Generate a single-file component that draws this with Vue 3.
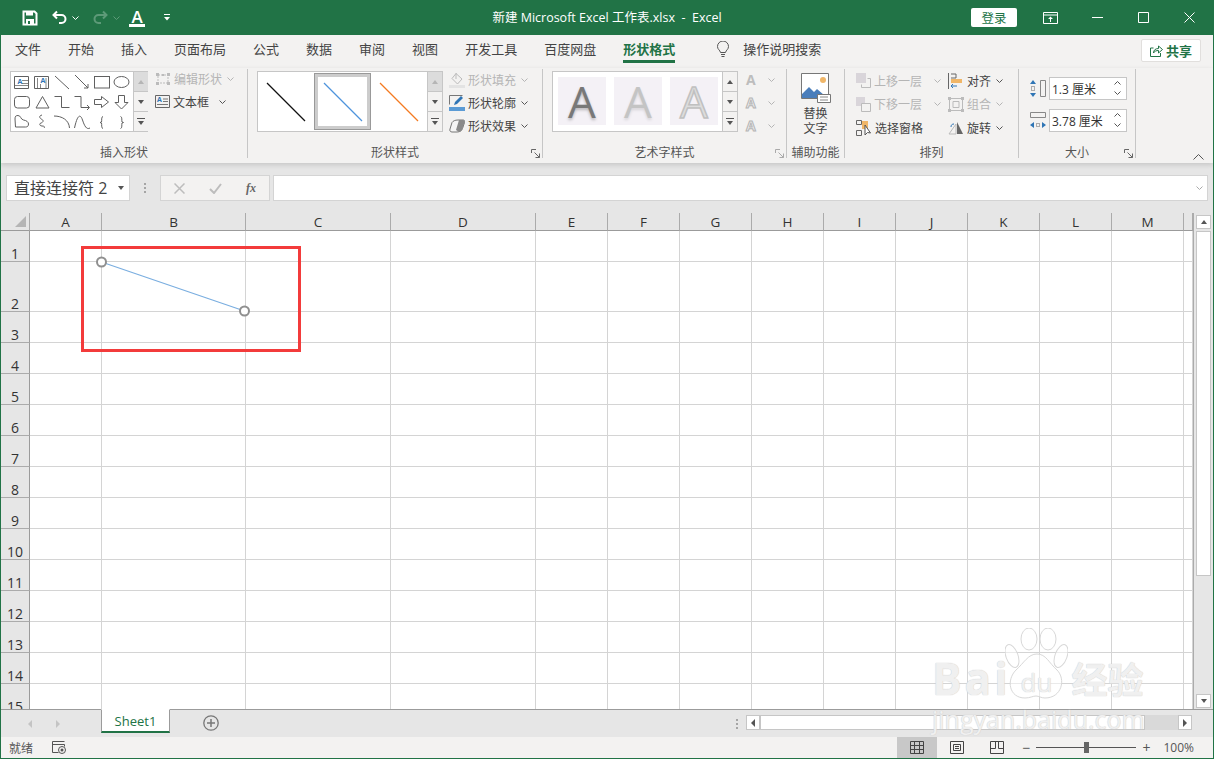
<script setup>
const tabs = ["文件", "开始", "插入", "页面布局", "公式", "数据", "审阅", "视图", "开发工具", "百度网盘"];
const columns = ["A", "B", "C", "D", "E", "F", "G", "H", "I", "J", "K", "L", "M", ""];
const rowHeights = [31, 50, 31, 31, 31, 31, 31, 31, 31, 31, 31, 31, 31, 31, 31];
const rows = rowHeights.map((h, i) => ({ id: i + 1, h }));
const sheetRows = "18px " + rowHeights.map((h) => h + "px").join(" ");
</script>

<template>
  <div class="app">
    <header class="titlebar">
      <div class="qat">
        <svg class="q-save" width="16" height="16" viewBox="0 0 16 16"><path d="M1.500 1.500h11l2 2v11h-13z" fill="none" stroke="#fff" stroke-width="2" /><path d="M4 1.500h7v4H4zM4 9h8v6H4z" fill="#fff" /><path d="M6 11h2v3H6z" fill="#217346" /></svg>
        <svg class="q-undo" width="15" height="15" viewBox="0 0 15 15"><path d="M5 1.500 1.500 5 5 8.500M2 5h7.500a3.700 3.700 0 0 1 0 8H7" fill="none" stroke="#fff" stroke-width="2" /></svg>
        <svg class="chev-w" width="7" height="4" viewBox="0 0 7 4"><path d="M.5.500l3 3 3-3" fill="none" stroke="#fff" /></svg>
        <svg class="q-redo" width="15" height="15" viewBox="0 0 15 15"><path d="M10 1.500 13.500 5 10 8.500M13 5H5.500a3.700 3.700 0 0 0 0 8H8" fill="none" stroke="#5d9a78" stroke-width="2" /></svg>
        <svg class="chev-w" width="7" height="4" viewBox="0 0 7 4"><path d="M.5.500l3 3 3-3" fill="none" stroke="#5d9a78" /></svg>
        <div class="q-font">A</div>
        <svg class="q-more" width="6" height="7" viewBox="0 0 6 7"><path d="M0 .5h6" stroke="#fff" /><path d="M0 3h6L3 6.500z" fill="#fff" /></svg>
      </div>
      <div class="doc-title">新建 Microsoft Excel 工作表.xlsx&nbsp; -&nbsp; Excel</div>
      <div class="win-controls">
        <button class="login">登录</button>
        <svg class="w-display" width="15" height="12" viewBox="0 0 15 12"><path d="M.5.500h14v11H.5zM.5 3h14" fill="none" stroke="#fff" /><path d="M7.500 4.500 5 7h5zM7 7h1v3H7z" fill="#fff" /></svg>
        <svg class="w-min" width="11" height="11" viewBox="0 0 11 11"><path d="M0 5.500h11" stroke="#fff" /></svg>
        <svg class="w-max" width="11" height="11" viewBox="0 0 11 11"><path d="M.5.500h10v10H.5z" fill="none" stroke="#fff" /></svg>
        <svg class="w-close" width="11" height="11" viewBox="0 0 11 11"><path d="M.5.500l10 10M10.500.500l-10 10" stroke="#fff" /></svg>
      </div>
    </header>

    <nav class="tabs">
      <span v-for="t in tabs" :key="t">{{ t }}</span>
      <span class="tab-active">形状格式</span>
      <svg class="bulb" width="12" height="17" viewBox="0 0 12 17"><path d="M3.500 11.500C3 9 .5 8.500.5 5.500a5.500 5.500 0 0 1 11 0c0 3-2.500 3.500-3 6zM4 13.500h4M4.500 15.500h3" fill="none" stroke="#555" /></svg>
      <span class="tell-me">操作说明搜索</span>
      <button class="share">
        <svg width="13" height="12" viewBox="0 0 13 12"><path d="M3.500 3H.5v8.500h10V8" fill="none" stroke="#217346" /><path d="M3.500 8c0-3 2-4.500 5-4.500V1l4 3.500-4 3.500V5.500c-2 0-4 .5-5 2.500z" fill="none" stroke="#217346" /></svg>
        共享
      </button>
    </nav>

    <section class="ribbon">
      <div class="group g-shapes">
        <div class="group-body">
          <div class="gallery shapes-gallery">
            <svg class="shapes" width="123" height="60" viewBox="10 71 123 60" fill="none" stroke="#606060">
              <path d="M14.500 76.500h14v12h-14zM34.500 76.500h14v12h-14z" />
              <path d="M22 80.500h6M22 83.500h6M15 85.500h13M37.500 78v10M40.500 84v4M46 78v10" stroke="#888" />
              <path d="M55 76l14 13M75 75l13 13M88 84v4h-4" />
              <rect x="94.500" y="76.500" width="15" height="11.500" />
              <ellipse cx="121.500" cy="82" rx="7.500" ry="5.500" />
              <rect x="14.500" y="96.500" width="15" height="11.500" rx="3" />
              <path d="M42.500 96.500 36 108h13zM54.500 96.500h7v11h8M74.500 96.500h6.500v11h8M87 105l2.500 2.500L87 110M94.500 99.500h7v-3l7 5.500-7 5.500v-3h-7zM118.500 95.500h6v7h3.500l-6.500 6.500-6.500-6.500h3.500z" />
              <path d="M15 119c0-3 1-3.500 3-3.500 3 0 2.500 4 5.500 4.500 3 .500 5 2 5 4 0 2-1 3-3 3H15.500zM42 115c-4 1-2 3.500 0 4.500s1 3-1 3.500-1.500 3 1 3 3 1 2 2" />
              <path d="M54 116c8 0 15 4 15.500 12M74.500 128c3-14 6-14 8-8s4 10 7.500 8" />
              <path d="M103 116.500c-2 0-1 4.500-1.500 5.500l-1.500.500 1.500.500c.500 1 -.500 5.500 1.500 5.500M120.500 116.500c2 0 1 4.500 1.500 5.500l1.500.500-1.500.500c-.500 1 .500 5.500-1.500 5.500" />
              <text x="17.500" y="83.500" class="svg-a">A</text>
              <text x="40.500" y="83" class="svg-a">A</text>
            </svg>
            <div class="scroller">
              <span class="sc-up disabled"><i class="tri up"></i></span>
              <span class="sc-down"><i class="tri"></i></span>
              <span class="sc-more"><i class="tri bar"></i></span>
            </div>
          </div>
          <div class="tool-col col-shapes">
            <div class="tool disabled">
              <svg width="16" height="14" viewBox="0 0 16 14"><path d="M3 3h10v8H3z" fill="none" stroke="#bbb" stroke-dasharray="2 1" /><path d="M1 1h3v3H1zM12 1h3v3h-3zM1 10h3v3H1zM12 10h3v3h-3zM7 2h2v2H7z" fill="#bbb" /></svg>
              编辑形状
              <svg class="chev" viewBox="0 0 7 4"><path d="M.5.500l3 3 3-3" /></svg>
            </div>
            <div class="tool">
              <svg width="15" height="13" viewBox="0 0 15 13"><path d="M.5.500h14v12H.5z" fill="none" stroke="#666" /><path d="M8 4h5M8 6.500h5M2 9.500h11" stroke="#777" /><text x="2" y="7" class="svg-a">A</text></svg>
              文本框
              <svg class="chev chev-far" viewBox="0 0 7 4"><path d="M.5.500l3 3 3-3" /></svg>
            </div>
          </div>
        </div>
        <div class="group-label">插入形状</div>
      </div>

      <div class="group g-style">
        <div class="group-body">
          <div class="gallery style-gallery">
            <div class="line-tile"><svg width="40" height="40" viewBox="0 0 40 40"><path d="M1 1l38 38" fill="none" stroke="#111" stroke-width="1.300" /></svg></div>
            <div class="line-tile selected"><svg width="40" height="40" viewBox="0 0 40 40"><path d="M1 1l38 38" fill="none" stroke="#4f94dc" stroke-width="1.300" /></svg></div>
            <div class="line-tile"><svg width="40" height="40" viewBox="0 0 40 40"><path d="M1 1l38 38" fill="none" stroke="#f47a20" stroke-width="1.300" /></svg></div>
            <div class="scroller">
              <span class="sc-up disabled"><i class="tri up"></i></span>
              <span class="sc-down"><i class="tri"></i></span>
              <span class="sc-more"><i class="tri bar"></i></span>
            </div>
          </div>
          <div class="tool-col col-style">
            <div class="tool disabled">
              <svg width="16" height="16" viewBox="0 0 16 16"><path d="M7 1.500l6 5.500-4.500 5L3 6.500z" fill="#f3f2f1" stroke="#bbb" /><path d="M7 1v6" stroke="#bbb" /><path d="M0 13h16v3H0z" fill="#e3e3e3" /></svg>
              形状填充
              <svg class="chev" viewBox="0 0 7 4"><path d="M.5.500l3 3 3-3" /></svg>
            </div>
            <div class="tool">
              <svg width="16" height="16" viewBox="0 0 16 16"><path d="M.5.500h13M.5.500v9" fill="none" stroke="#777" /><path d="M5 10l1-3 6-6 2 2-6 6z" fill="#2f75b5" /><path d="M0 12h16v4H0z" fill="#5b9bd5" /></svg>
              形状轮廓
              <svg class="chev" viewBox="0 0 7 4"><path d="M.5.500l3 3 3-3" /></svg>
            </div>
            <div class="tool">
              <svg width="16" height="14" viewBox="0 0 16 14"><path d="M3 3.500C4 2 6 1 9 1h5c1.500 0 2 1 1.500 2.500l-2 6C13 11.500 11 13 8 13H3C1 13 .5 11.500 1 10z" fill="#f5f5f5" stroke="#777" /><path d="M10 1h4c1.500 0 2 1 1.500 2.500l-2 6C13 11.500 12 12.500 10 13l-3-2z" fill="#8a8a8a" /></svg>
              形状效果
              <svg class="chev" viewBox="0 0 7 4"><path d="M.5.500l3 3 3-3" /></svg>
            </div>
          </div>
        </div>
        <div class="group-label">形状样式</div>
        <svg class="launcher" width="9" height="9" viewBox="0 0 9 9"><path d="M.5 4V.5H5M8.500 8.500l-5-5M8.500 4.500v4h-4" fill="none" stroke="#666" /></svg>
      </div>

      <div class="group g-art">
        <div class="group-body">
          <div class="gallery art-gallery">
            <div class="art-tiles">
              <span class="art a1">A</span>
              <span class="art a2">A</span>
              <span class="art a3">A</span>
            </div>
            <div class="scroller">
              <span class="sc-up"><i class="tri up"></i></span>
              <span class="sc-down"><i class="tri"></i></span>
              <span class="sc-more"><i class="tri bar"></i></span>
            </div>
          </div>
          <div class="tool-col col-art">
            <div class="tool disabled"><b class="a-mini">A</b><svg class="chev" viewBox="0 0 7 4"><path d="M.5.500l3 3 3-3" /></svg></div>
            <div class="tool disabled"><b class="a-mini hollow">A</b><svg class="chev" viewBox="0 0 7 4"><path d="M.5.500l3 3 3-3" /></svg></div>
            <div class="tool disabled"><b class="a-mini hollow">A</b><svg class="chev" viewBox="0 0 7 4"><path d="M.5.500l3 3 3-3" /></svg></div>
          </div>
        </div>
        <div class="group-label">艺术字样式</div>
        <svg class="launcher faint" width="9" height="9" viewBox="0 0 9 9"><path d="M.5 4V.5H5M8.500 8.500l-5-5M8.500 4.500v4h-4" fill="none" stroke="#aaa" /></svg>
      </div>

      <div class="group g-alt">
        <div class="group-body alt-body">
          <svg width="30" height="30" viewBox="0 0 30 30">
            <path d="M.5.500h27v25H.5z" fill="#fff" stroke="#777" />
            <circle cx="22" cy="7" r="3" fill="#f0b668" />
            <path d="M1 21l7-7 5 5 3-3 7 6v3H1z" fill="#4a7ebb" />
            <path d="M16.500 21.500h13v8h-13z" fill="#fff" stroke="#777" />
            <path d="M19 24h8M19 27h8" stroke="#888" />
          </svg>
          <div class="alt-text">替换<br />文字</div>
        </div>
        <div class="group-label">辅助功能</div>
      </div>

      <div class="group g-arrange">
        <div class="group-body arrange-grid">
          <div class="tool disabled">
            <svg width="15" height="15" viewBox="0 0 15 15"><path d="M0 0h10v10H0z" fill="#d9d5da" /><path d="M11.500 5.500h3v9h-9v-3" fill="none" stroke="#bbb" /></svg>
            上移一层<svg class="chev chev-wide" viewBox="0 0 7 4"><path d="M.5.500l3 3 3-3" /></svg>
          </div>
          <div class="tool">
            <svg width="16" height="16" viewBox="0 0 16 16"><path d="M.5 0v16" stroke="#666" /><path d="M3 1h5v4H3" fill="none" stroke="#666" /><path d="M3 6h11v4H3z" fill="#f0b668" /><path d="M9 13H3m2-2l-2 2 2 2" fill="none" stroke="#2f75b5" /></svg>
            对齐<svg class="chev" viewBox="0 0 7 4"><path d="M.5.500l3 3 3-3" /></svg>
          </div>
          <div class="tool disabled">
            <svg width="15" height="15" viewBox="0 0 15 15"><path d="M0 0h9v9H0z" fill="#d9d5da" /><path d="M5.500 6.500h9v8h-9z" fill="#f3f2f1" stroke="#bbb" /></svg>
            下移一层<svg class="chev chev-wide" viewBox="0 0 7 4"><path d="M.5.500l3 3 3-3" /></svg>
          </div>
          <div class="tool disabled">
            <svg width="16" height="15" viewBox="0 0 16 15"><path d="M0 0h3v3H0zM13 0h3v3h-3zM0 12h3v3H0zM13 12h3v3h-3z" fill="#bbb" /><path d="M5 4.500h6v6H5zM1.500 3v9M14.500 3v9M3 1.500h10M3 13.500h10" fill="none" stroke="#bbb" /></svg>
            组合<svg class="chev" viewBox="0 0 7 4"><path d="M.5.500l3 3 3-3" /></svg>
          </div>
          <div class="tool">
            <svg width="16" height="16" viewBox="0 0 16 16"><path d="M.5.500h5v4h-5zM.5 10.500h5v5h-5z" fill="none" stroke="#666" /><path d="M6 1h6v8H6z" fill="#f0b668" /><path d="M9 5v10l2.500-2.500 3 .5z" fill="#fff" stroke="#555" /></svg>
            选择窗格
          </div>
          <div class="tool">
            <svg width="16" height="14" viewBox="0 0 16 14"><path d="M8 3 1 13h7z" fill="none" stroke="#bbb" /><path d="M9 1l6 12H9z" fill="#666" /><path d="M3 6c0-2 1-3 3-3" fill="none" stroke="#2f75b5" /></svg>
            旋转<svg class="chev" viewBox="0 0 7 4"><path d="M.5.500l3 3 3-3" /></svg>
          </div>
        </div>
        <div class="group-label">排列</div>
      </div>

      <div class="group g-size">
        <div class="group-body size-body">
          <div class="size-row">
            <svg class="size-icon" width="16" height="17" viewBox="0 0 16 17"><path d="M10.500.5h5v16h-5z" fill="none" stroke="#888" /><path d="M0 4l3-4 3 4zM0 13l3 4 3-4z" fill="#2f75b5" /><path d="M1.500 6.500h3v4h-3z" fill="none" stroke="#666" stroke-dasharray="1 1" /></svg>
            <div class="size-input">1.3 厘米
              <span class="spin"><svg class="chev flip" viewBox="0 0 7 4"><path d="M.5.500l3 3 3-3" /></svg><svg class="chev" viewBox="0 0 7 4"><path d="M.5.500l3 3 3-3" /></svg></span>
            </div>
          </div>
          <div class="size-row">
            <svg class="size-icon" width="16" height="17" viewBox="0 0 16 17"><path d="M.5.500h15v5H.5z" fill="none" stroke="#888" /><path d="M4 10v6l-4-3zM12 10v6l4-3z" fill="#2f75b5" /><path d="M6.500 11.500h3v3h-3z" fill="none" stroke="#666" stroke-dasharray="1 1" /></svg>
            <div class="size-input">3.78 厘米
              <span class="spin"><svg class="chev flip" viewBox="0 0 7 4"><path d="M.5.500l3 3 3-3" /></svg><svg class="chev" viewBox="0 0 7 4"><path d="M.5.500l3 3 3-3" /></svg></span>
            </div>
          </div>
        </div>
        <div class="group-label">大小</div>
        <svg class="launcher" width="9" height="9" viewBox="0 0 9 9"><path d="M.5 4V.5H5M8.500 8.500l-5-5M8.500 4.500v4h-4" fill="none" stroke="#666" /></svg>
      </div>

      <svg class="collapse" width="11" height="6" viewBox="0 0 11 6"><path d="M.5 5.500l5-5 5 5" fill="none" stroke="#555" /></svg>
    </section>

    <div class="formula-row">
      <div class="name-box">直接连接符 2<i class="tri name-tri"></i></div>
      <div class="dots"><i></i><i></i><i></i></div>
      <div class="fx-buttons">
        <svg width="11" height="11" viewBox="0 0 11 11"><path d="M.5.500l10 10M10.500.500l-10 10" stroke="#bdbdbd" stroke-width="1.500" /></svg>
        <svg width="13" height="11" viewBox="0 0 13 11"><path d="M1 6l4 4 7-9" fill="none" stroke="#bdbdbd" stroke-width="2" /></svg>
        <span class="fx">fx</span>
      </div>
      <div class="formula-input"><svg class="chev" viewBox="0 0 7 4"><path d="M.5.500l3 3 3-3" /></svg></div>
    </div>

    <main class="workspace">
      <div class="sheet" :style="{ gridTemplateRows: sheetRows }">
        <div class="corner"><i></i></div>
        <div v-for="c in columns" :key="'col' + c" class="col-head">{{ c }}</div>
        <template v-for="r in rows" :key="r.id">
          <div class="row-head">{{ r.id }}</div>
          <div v-for="c in columns" :key="c" class="cell"></div>
        </template>
        <svg class="shape-layer" width="1191" height="496" viewBox="1 213 1191 496">
          <path d="M101.500 262 244.500 311" stroke="#7aaee0" stroke-width="1.200" />
          <circle cx="101.500" cy="262" r="4.500" fill="#fff" stroke="#8f8f8f" stroke-width="2" />
          <circle cx="244.500" cy="311" r="4.500" fill="#fff" stroke="#8f8f8f" stroke-width="2" />
          <rect x="82.500" y="247.500" width="217" height="103" fill="none" stroke="#f33b3b" stroke-width="3" />
        </svg>
      </div>
      <div class="vscroll">
        <span class="sb-btn"><i class="tri up"></i></span>
        <span class="sb-thumb"></span>
        <span class="sb-btn"><i class="tri"></i></span>
      </div>
    </main>

    <div class="sheetbar">
      <div class="sheet-nav"><i class="tri-l"></i><i class="tri-r"></i></div>
      <div class="sheet-tab">Sheet1</div>
      <svg class="add-sheet" width="16" height="16" viewBox="0 0 16 16"><circle cx="8" cy="8" r="7.200" fill="none" stroke="#777" stroke-width="1.300" /><path d="M8 4v8M4 8h8" stroke="#777" stroke-width="1.500" /></svg>
      <div class="dots bar-dots"><i></i><i></i><i></i></div>
      <div class="hscroll">
        <span class="hb-btn"><i class="tri-l dark"></i></span>
        <span class="hb-thumb"></span>
        <span class="hb-btn"><i class="tri-r dark"></i></span>
      </div>
    </div>

    <footer class="statusbar">
      <span class="ready">就绪</span>
      <svg width="14" height="13" viewBox="0 0 14 13"><path d="M.5.500h12M.5.500v11h6M.5 3.500h12v2" fill="none" stroke="#555" /><circle cx="10" cy="9" r="3.500" fill="none" stroke="#555" /><circle cx="10" cy="9" r="1.500" fill="#555" /></svg>
      <div class="status-right">
        <span class="view active"><svg width="14" height="13" viewBox="0 0 14 13"><path d="M.5.500h13v12H.5zM.5 4.500h13M.5 8.500h13M4.500.500v12M9.500.500v12" fill="none" stroke="#444" /></svg></span>
        <span class="view"><svg width="14" height="13" viewBox="0 0 14 13"><path d="M.5.500h13v12H.5zM3.500 3.500h7v6h-7zM5 5.500h4M5 7.500h4" fill="none" stroke="#444" /></svg></span>
        <span class="view"><svg width="14" height="13" viewBox="0 0 14 13"><path d="M.5.500h13v12H.5zM.5 7.500h5v-7M8.500.500v7h5" fill="none" stroke="#444" /></svg></span>
        <span class="zoom-sign">−</span>
        <div class="slider"><i></i></div>
        <span class="zoom-sign">+</span>
        <span class="zoom-val">100%</span>
      </div>
    </footer>

    <div class="watermark">
      <div class="wm-top">
        <span class="wm-bai">Bai</span>
        <div class="paw">
          <svg width="63" height="72" viewBox="0 0 63 72"><g fill="rgba(255,255,255,.5)" stroke="#d8d8d8"><ellipse cx="24" cy="11" rx="8" ry="11" /><ellipse cx="43" cy="11" rx="8" ry="11" /><ellipse cx="7" cy="28" rx="6" ry="12" transform="rotate(-20 7 28)" /><ellipse cx="56" cy="28" rx="6" ry="12" transform="rotate(20 56 28)" /><path d="M32 26c9 0 12 9 20 16 9 9 5 28-12 28-4 0-6-2-9-2s-6 2-11 2C4 70 1 52 11 42c8-7 12-16 21-16z" /></g></svg>
          <span class="wm-du">du</span>
        </div>
        <span class="wm-cn">经验</span>
      </div>
      <div class="wm-url">jingyan.baidu.com</div>
    </div>
  </div>
</template>

<style scoped>
.app {
  position: relative;
  width: 1214px;
  height: 759px;
  box-sizing: border-box;
  display: flex;
  flex-direction: column;
  overflow: hidden;
  background: #e6e6e6;
  border: 1px solid #217346;
  border-top: 0;
  font-family: "Open Sans", "Noto Sans CJK SC", sans-serif;
  color: #444;
  font-size: 12px;
}

/* title bar */
.titlebar {
  height: 35px;
  flex: none;
  margin: 0 -1px;
  background: #217346;
  color: #fff;
  display: grid;
  grid-template-columns: 1fr auto 1fr;
  align-items: center;
}
.qat {
  display: flex;
  align-items: center;
  padding-left: 22px;
}
.q-undo { margin-left: 14px; }
.chev-w { margin-left: 5px; }
.q-redo { margin-left: 14px; }
.q-font {
  margin-left: 9px;
  width: 16px;
  font-size: 17px;
  line-height: 15px;
  height: 15px;
  text-align: center;
  border-bottom: 3px solid #fff;
  font-weight: 600;
}
.q-more { margin-left: 19px; }
.doc-title {
  font-size: 12.500px;
  white-space: nowrap;
  padding-bottom: 3px;
}
.win-controls {
  display: flex;
  align-items: center;
  justify-content: flex-end;
  padding-right: 19px;
}
.login {
  width: 46px;
  height: 19px;
  padding: 0;
  border: 0;
  border-radius: 2px;
  background: #fff;
  color: #217346;
  font: 12.500px "Noto Sans CJK SC", sans-serif;
}
.w-display { margin-left: 26px; }
.w-min { margin-left: 34px; }
.w-max { margin-left: 35px; }
.w-close { margin-left: 35px; }

/* tabs */
.tabs {
  height: 33px;
  flex: none;
  background: #f3f2f1;
  display: flex;
  align-items: flex-start;
  gap: 27px;
  padding-left: 14px;
  font-size: 13px;
  color: #444;
}
.tabs > span { line-height: 26px; height: 26px; margin-top: 1px; }
.tabs > .tab-active {
  color: #217346;
  font-weight: 700;
  border-bottom: 3px solid #217346;
  height: 24px;
}
.bulb { margin: 6px 0 0 15px; }
.tabs > .tell-me { margin-left: -13px; }
.share {
  margin: 4px 12px 0 auto;
  width: 60px;
  height: 23px;
  padding: 0;
  border: 1px solid #e1dfdd;
  border-radius: 2px;
  background: #fff;
  color: #217346;
  font: 700 13px "Noto Sans CJK SC", sans-serif;
  display: flex;
  align-items: center;
  justify-content: center;
  gap: 3px;
}

/* ribbon */
.ribbon {
  height: 95px;
  flex: none;
  display: flex;
  background: #f3f2f1;
  position: relative;
  box-shadow: 0 2px 5px rgba(0, 0, 0, .14);
  z-index: 1;
}
.group {
  position: relative;
  box-sizing: border-box;
  height: 89px;
  margin-top: 1px;
  border-right: 1px solid #c6c6c6;
  display: flex;
  flex-direction: column;
}
.g-shapes { width: 247px; }
.g-style { width: 295px; }
.g-art { width: 244px; }
.g-alt { width: 58px; }
.g-arrange { width: 174px; }
.g-size { width: 117px; }
.group-body {
  flex: 1;
  display: flex;
  padding-top: 2px;
  min-height: 0;
}
.group-label {
  height: 13px;
  line-height: 16px;
  text-align: center;
  font-size: 12px;
  color: #555;
  white-space: nowrap;
}
.launcher {
  position: absolute;
  right: 2px;
  bottom: 0;
}
.collapse {
  position: absolute;
  right: 9px;
  bottom: 3px;
}
.gallery {
  height: 61px;
  box-sizing: border-box;
  border: 1px solid #c6c6c6;
  background: #fff;
  display: flex;
}
.shapes-gallery { margin-left: 9px; width: 138px; }
.shapes { flex: none; margin: -1px 0 0 -1px; }
.svg-a {
  font: 700 7px "Open Sans", sans-serif;
  fill: #2f75b5;
  stroke: none;
}
.scroller {
  margin-left: auto;
  width: 14px;
  flex: none;
  align-self: stretch;
  display: flex;
  flex-direction: column;
  border-left: 1px solid #c6c6c6;
  background: #f3f2f1;
}
.scroller span {
  flex: 1;
  display: flex;
  align-items: center;
  justify-content: center;
  border-bottom: 1px solid #c6c6c6;
}
.scroller span:last-child { border-bottom: 0; }
.scroller .disabled { background: #dcdcdc; color: #aaa; }
.tri {
  display: block;
  width: 0;
  height: 0;
  border-left: 3.500px solid transparent;
  border-right: 3.500px solid transparent;
  border-top: 4px solid #555;
}
.tri.up {
  border-top: 0;
  border-bottom: 4px solid #555;
}
.disabled .tri.up { border-bottom-color: #b5b5b5; }
.tri.bar { position: relative; margin-top: 3px; }
.tri.bar::before {
  content: "";
  position: absolute;
  top: -7px;
  left: -4px;
  width: 8px;
  height: 1px;
  background: #555;
}
.tool-col {
  display: flex;
  flex-direction: column;
}
.tool {
  display: flex;
  align-items: center;
  gap: 3px;
  height: 23px;
  white-space: nowrap;
  color: #444;
}
.tool.disabled { color: #b5b5b5; }
.chev {
  width: 7px;
  height: 4px;
  flex: none;
  margin-left: 2px;
  fill: none;
  stroke: #555;
}
.disabled .chev { stroke: #b5b5b5; }
.chev-far { margin-left: 7px; }
.chev-wide { margin-left: 9px; }
.flip { transform: rotate(180deg); }
.col-shapes { margin: -4px 0 0 7px; }
.col-style { margin: -3px 0 0 6px; }

.style-gallery {
  margin-left: 9px;
  width: 186px;
  align-items: center;
}
.line-tile {
  box-sizing: border-box;
  width: 57px;
  height: 57px;
  display: flex;
  align-items: center;
  justify-content: center;
}
.line-tile.selected {
  border: 1px solid #999;
  outline: 3px solid #ccc;
  outline-offset: -4px;
}

.art-gallery { margin-left: 9px; width: 186px; }
.art-tiles {
  display: flex;
  gap: 8px;
  padding: 5px 0 0 5px;
}
.art {
  width: 48px;
  height: 48px;
  background: #f4f1f6;
  text-align: center;
  font: 500 44px/48px "Open Sans", sans-serif;
}
.a1 { color: #787878; text-shadow: 0 2px 3px rgba(0, 0, 0, .25); }
.a2 { color: #c4c4c4; text-shadow: 0 2px 3px rgba(0, 0, 0, .12); }
.a3 { color: #ddd; -webkit-text-stroke: 1.500px #c0c0c0; }
.col-art { margin-left: 8px; margin-top: -3px; }
.a-mini {
  font: 700 14px "Open Sans", sans-serif;
  color: #bdbdbd;
  margin-right: 7px;
}
.a-mini.hollow {
  color: #eee;
  -webkit-text-stroke: 1px #b5b5b5;
}

.alt-body {
  flex-direction: column;
  align-items: center;
  padding-top: 4px;
}
.alt-text {
  text-align: center;
  line-height: 15px;
  margin-top: 3px;
}

.arrange-grid {
  display: grid;
  grid-template-columns: 92px 1fr;
  grid-auto-rows: 23.500px;
  padding: 0 0 0 11px;
}
.arrange-grid .tool { height: 23.500px; }

.size-body {
  flex-direction: column;
  gap: 9px;
  padding: 8px 0 0 11px;
}
.size-row {
  display: flex;
  align-items: center;
  gap: 3px;
}
.size-icon { flex: none; }
.size-input {
  box-sizing: border-box;
  width: 78px;
  height: 23px;
  border: 1px solid #c6c6c6;
  background: #fff;
  padding-left: 2px;
  display: flex;
  align-items: center;
  position: relative;
  color: #333;
  font-size: 12px;
  white-space: nowrap;
}
.spin {
  position: absolute;
  right: 5px;
  top: 3px;
  display: flex;
  flex-direction: column;
  gap: 6px;
}

/* formula bar */
.formula-row {
  height: 50px;
  flex: none;
  box-sizing: border-box;
  padding: 12px 5px 12px 5px;
  display: flex;
  align-items: stretch;
  background: #e6e6e6;
}
.name-box {
  width: 124px;
  box-sizing: border-box;
  border: 1px solid #d4d4d4;
  background: #fff;
  font-size: 16px;
  line-height: 24px;
  padding-left: 7px;
  color: #444;
  position: relative;
  white-space: nowrap;
}
.name-tri {
  position: absolute;
  right: 5px;
  top: 10px;
}
.dots {
  width: 30px;
  display: flex;
  flex-direction: column;
  align-items: center;
  justify-content: center;
  gap: 2px;
}
.dots i {
  width: 2px;
  height: 2px;
  background: #a5a5a5;
}
.fx-buttons {
  width: 110px;
  box-sizing: border-box;
  border: 1px solid #d4d4d4;
  background: #f3f2f1;
  display: flex;
  align-items: center;
  gap: 24px;
  padding-left: 13px;
}
.fx {
  font: italic 700 12px "Liberation Serif", serif;
  color: #666;
}
.formula-input {
  flex: 1;
  margin-left: 3px;
  border: 1px solid #d4d4d4;
  background: #fff;
  display: flex;
  align-items: center;
  justify-content: flex-end;
  padding-right: 4px;
}
.formula-input .chev { stroke: #aaa; }

/* sheet */
.workspace {
  height: 496px;
  flex: none;
  display: flex;
}
.sheet {
  position: relative;
  width: 1192px;
  height: 496px;
  overflow: hidden;
  background: #fff;
  display: grid;
  grid-template-columns: 29px 72px 144px 145px 145px 72px 72px 72px 72px 72px 72px 72px 72px 72px 9px;
}
.corner {
  background: #e6e6e6;
  border-right: 1px solid #ababab;
  border-bottom: 1px solid #9b9b9b;
  box-sizing: border-box;
  position: relative;
}
.corner i {
  position: absolute;
  right: 3px;
  bottom: 3px;
  width: 0;
  height: 0;
  border-left: 11px solid transparent;
  border-bottom: 11px solid #b5b5b5;
}
.col-head {
  background: #e6e6e6;
  box-sizing: border-box;
  border-right: 1px solid #ababab;
  border-bottom: 1px solid #9b9b9b;
  text-align: center;
  font-size: 13.500px;
  line-height: 18px;
  color: #333;
}
.row-head {
  background: #e6e6e6;
  box-sizing: border-box;
  border-right: 1px solid #9b9b9b;
  border-bottom: 1px solid #ababab;
  display: flex;
  align-items: flex-end;
  justify-content: center;
  font-size: 14px;
  line-height: 14px;
  color: #333;
}
.cell {
  box-sizing: border-box;
  border-right: 1px solid #d4d4d4;
  border-bottom: 1px solid #d4d4d4;
}
.shape-layer {
  position: absolute;
  left: 0;
  top: 0;
}
.vscroll {
  flex: 1;
  border-left: 1px solid #ababab;
  display: flex;
  flex-direction: column;
  align-items: center;
  padding-top: 2px;
  background: #e6e6e6;
}
.sb-btn {
  box-sizing: border-box;
  width: 15px;
  height: 14px;
  flex: none;
  border: 1px solid #c6c6c6;
  background: #fff;
  display: flex;
  align-items: center;
  justify-content: center;
}
.sb-thumb {
  width: 15px;
  height: 345px;
  box-sizing: border-box;
  margin-top: 2px;
  margin-bottom: auto;
  background: #fff;
  border: 1px solid #c6c6c6;
}
.sb-btn:last-child { margin-bottom: 1px; }

/* sheet tabs */
.sheetbar {
  height: 28px;
  flex: none;
  box-sizing: border-box;
  border-top: 1px solid #9b9b9b;
  background: #e6e6e6;
  display: flex;
  align-items: flex-start;
  position: relative;
}
.sheet-nav {
  width: 100px;
  height: 27px;
  display: flex;
  align-items: center;
  gap: 24px;
  padding-left: 27px;
  box-sizing: border-box;
}
.tri-l, .tri-r {
  width: 0;
  height: 0;
  border-top: 4px solid transparent;
  border-bottom: 4px solid transparent;
}
.tri-l { border-right: 4px solid #c4c4c4; }
.tri-r { border-left: 4px solid #c4c4c4; }
.tri-l.dark { border-right-color: #555; }
.tri-r.dark { border-left-color: #555; }
.sheet-tab {
  box-sizing: border-box;
  width: 69px;
  height: 24px;
  margin-top: -1px;
  background: #fff;
  border: 1px solid #9b9b9b;
  border-top-color: #fff;
  border-bottom: 2px solid #217346;
  color: #217346;
  font-size: 13px;
  line-height: 22px;
  text-align: center;
}
.add-sheet { margin: 5px 0 0 33px; }
.bar-dots {
  width: 20px;
  height: 27px;
  margin-left: 508px;
}
.hscroll {
  position: absolute;
  left: 745px;
  top: 5px;
  width: 446px;
  height: 15px;
  display: flex;
  background: #d9d9d9;
}
.hb-btn {
  box-sizing: border-box;
  width: 14px;
  flex: none;
  border: 1px solid #c6c6c6;
  background: #fff;
  display: flex;
  align-items: center;
  justify-content: center;
}
.hb-thumb {
  width: 385px;
  margin-right: auto;
  box-sizing: border-box;
  background: #fff;
  border: 1px solid #c6c6c6;
}

/* status bar */
.statusbar {
  height: 21px;
  flex: 1;
  display: flex;
  align-items: center;
  background: #f3f2f1;
  padding-left: 8px;
  color: #555;
}
.ready { width: 43px; }
.status-right {
  margin-left: auto;
  display: flex;
  align-items: center;
  align-self: stretch;
  padding-right: 19px;
}
.view {
  width: 40px;
  display: flex;
  align-self: stretch;
  align-items: center;
  justify-content: center;
}
.view.active { background: #c8c8c8; }
.zoom-sign {
  font-size: 14px;
  line-height: 14px;
  width: 12px;
  text-align: center;
  color: #555;
}
.status-right .view + .zoom-sign { margin-left: 3px; }
.slider {
  position: relative;
  width: 100px;
  height: 1px;
  margin: 0 4px;
  background: #555;
}
.slider i {
  position: absolute;
  left: 48px;
  top: -5px;
  width: 5px;
  height: 11px;
  background: #666;
}
.zoom-val {
  margin-left: 11px;
  font-size: 12px;
  color: #555;
}

/* watermark */
.watermark {
  position: absolute;
  left: 931px;
  top: 628px;
  width: 216px;
  pointer-events: none;
  color: rgba(255, 255, 255, .7);
  text-shadow: 0 0 1px #cfcfcf, 0 0 1px #cfcfcf;
  font-family: "Open Sans", sans-serif;
}
.wm-top {
  display: flex;
  align-items: flex-end;
  box-sizing: border-box;
  height: 77px;
  padding-bottom: 5px;
}
.wm-bai {
  font: 700 44px/44px "Open Sans", sans-serif;
  letter-spacing: 3px;
}
.paw {
  position: relative;
  width: 63px;
  height: 72px;
  flex: none;
  margin-left: -6px;
}
.wm-du {
  position: absolute;
  left: 16px;
  bottom: 3px;
  font-size: 26px;
  line-height: 30px;
  font-weight: 400;
}
.wm-cn {
  font: 700 36px/44px "Noto Sans CJK SC", sans-serif;
  margin-left: 4px;
  white-space: nowrap;
}
.wm-url {
  font-size: 25px;
  line-height: 28px;
  white-space: nowrap;
}
</style>

<style>
html, body { margin: 0; padding: 0; }
</style>
